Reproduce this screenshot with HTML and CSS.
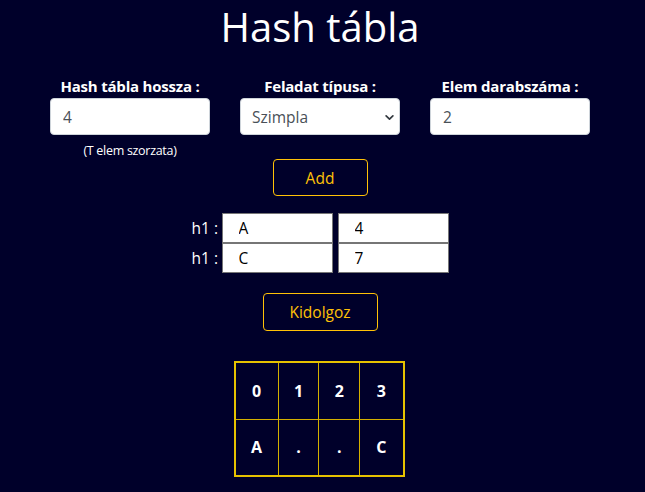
FILE: index.html
```html
<!DOCTYPE html>
<html lang="hu">
<head>
<meta charset="utf-8">
<title>Hash tábla</title>
<link rel="stylesheet" href="styles.css">
</head>
<body>
<main class="page">
  <h1 class="title">Hash tábla</h1>
  <div class="fields">
    <div class="field">
      <label class="field-label">Hash tábla hossza :</label>
      <input class="control" type="text" value="4">
      <span class="hint">(T elem szorzata)</span>
    </div>
    <div class="field">
      <label class="field-label">Feladat típusa :</label>
      <div class="select-wrap">
        <select class="control select">
          <option>Szimpla</option>
        </select>
        <svg class="chevron" width="9" height="9" viewBox="0 0 16 16"><path d="M2 5l6 6 6-6" fill="none" stroke="#343a40" stroke-width="3" stroke-linecap="round" stroke-linejoin="round"/></svg>
      </div>
    </div>
    <div class="field">
      <label class="field-label">Elem darabszáma :</label>
      <input class="control" type="text" value="2">
    </div>
  </div>
  <button class="btn btn-add">Add</button>
  <div class="rows">
    <div class="row">
      <span class="row-label">h1 :</span>
      <input class="cell-input" type="text" value="A">
      <input class="cell-input" type="text" value="4">
    </div>
    <div class="row">
      <span class="row-label">h1 :</span>
      <input class="cell-input" type="text" value="C">
      <input class="cell-input" type="text" value="7">
    </div>
  </div>
  <button class="btn btn-run">Kidolgoz</button>
  <table class="hash">
    <tr><td class="c-wide">0</td><td>1</td><td>2</td><td class="c-wide">3</td></tr>
    <tr><td>A</td><td>.</td><td>.</td><td>C</td></tr>
  </table>
</main>
</body>
</html>
```

FILE: styles.css
```css
* { box-sizing: border-box; }
html, body {
  margin: 0;
  background: #00002a;
}
body {
  font-family: "Open Sans", "Noto Sans", sans-serif;
  color: #fff;
}
.page {
  width: 640px;
  display: flex;
  flex-direction: column;
  align-items: center;
}
.title {
  margin: 0;
  font-size: 40px;
  font-weight: 400;
  line-height: 54px;
}
.fields {
  display: flex;
  gap: 30px;
  margin-top: 23px;
}
.field {
  width: 160px;
  display: flex;
  flex-direction: column;
  align-items: center;
}
.field-label {
  font-size: 15px;
  font-weight: 700;
  line-height: 18px;
  margin-bottom: 3px;
  white-space: nowrap;
  letter-spacing: -0.2px;
}
.control {
  width: 160px;
  height: 37px;
  border: 1px solid #ced4da;
  border-radius: 4px;
  background: #fff;
  color: #495057;
  font-family: inherit;
  font-size: 15.5px;
  padding: 0 12px;
  outline: none;
}
.select-wrap {
  position: relative;
}
.select {
  appearance: none;
  -webkit-appearance: none;
  padding-left: 11px;
}
.chevron {
  position: absolute;
  right: 6px;
  top: 15px;
  pointer-events: none;
}
.hint {
  font-size: 12.5px;
  line-height: 16px;
  margin-top: 8px;
  letter-spacing: -0.3px;
}
.btn {
  background: transparent;
  border: 1px solid #ffc107;
  border-radius: 4px;
  color: #ffc107;
  font-family: inherit;
  font-size: 15.5px;
  height: 37px;
}
.btn-add {
  width: 95px;
  margin-top: 0;
}
.rows {
  margin-top: 17px;
  display: flex;
  flex-direction: column;
}
.row {
  display: flex;
  align-items: center;
}
.row-label {
  font-size: 15.5px;
  width: 30px;
  text-align: right;
  padding-right: 5px;
  white-space: nowrap;
}
.cell-input {
  width: 111px;
  height: 30px;
  border: 1px solid #767676;
  background: #fff;
  color: #000;
  font-family: inherit;
  font-size: 15.5px;
  padding: 0 16px;
  outline: none;
}
.cell-input + .cell-input {
  margin-left: 5px;
}
.btn-run {
  width: 115px;
  height: 38px;
  margin-top: 20px;
}
.hash {
  margin-top: 30px;
  width: 171px;
  border-collapse: collapse;
  border: 2px solid #e6c200;
  margin-left: -2px;
}
.hash td {
  border: 1px solid #d4b000;
  width: 40px;
  height: 57px;
  text-align: center;
  font-weight: 700;
  font-size: 16px;
  color: #fff;
  padding: 0;
}
.hash td.c-wide { width: 43px; }
```
